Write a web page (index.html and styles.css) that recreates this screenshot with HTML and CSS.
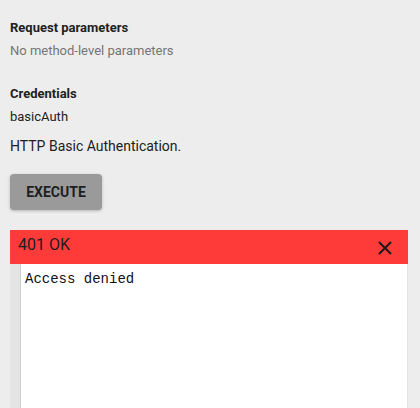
FILE: index.html
```html
<!DOCTYPE html>
<html>
<head>
<meta charset="utf-8">
<link rel="stylesheet" href="styles.css">
</head>
<body>
<div class="page">
  <section class="params">
    <h3 class="label">Request parameters</h3>
    <p class="muted">No method-level parameters</p>
  </section>
  <section class="creds">
    <h3 class="label">Credentials</h3>
    <p class="value">basicAuth</p>
    <p class="desc">HTTP Basic Authentication.</p>
  </section>
  <button class="execute">EXECUTE</button>
  <div class="response">
    <div class="status">
      <span class="code">401 OK</span>
      <svg class="close" width="14" height="14" viewBox="0 0 14 14"><path d="M1 1 L13 13 M13 1 L1 13" stroke="#1a1a1a" stroke-width="2" fill="none"/></svg>
    </div>
    <div class="body-wrap">
      <pre class="output">Access denied</pre>
    </div>
  </div>
</div>
</body>
</html>
```

FILE: styles.css
```css
html, body {
  margin: 0;
  padding: 0;
  background: #ededed;
  height: 408px;
  overflow: hidden;
}
.page {
  padding: 20px 12px 0 10px;
  font-family: Roboto, "Liberation Sans", sans-serif;
  color: #212121;
}
.label {
  margin: 0;
  font-size: 13px;
  font-weight: 700;
  line-height: 16px;
}
.muted {
  margin: 7px 0 0;
  font-size: 13px;
  line-height: 16px;
  color: #757575;
}
.creds {
  margin-top: 27px;
}
.value {
  margin: 7px 0 0;
  font-size: 13px;
  line-height: 16px;
}
.desc {
  margin: 13px 0 0;
  font-size: 14px;
  line-height: 16px;
}
.execute {
  display: block;
  margin-top: 20px;
  width: 92px;
  height: 36px;
  border: none;
  border-radius: 4px;
  background: #9a9a9a;
  color: #1f1f1f;
  font-family: Roboto, "Liberation Sans", sans-serif;
  font-size: 14px;
  font-weight: 700;
  padding: 0;
  box-shadow: 0 1px 3px rgba(0,0,0,0.25);
}
.response {
  margin-top: 20px;
  background: #e4e4e4;
  padding-right: 1px;
}
.status {
  display: flex;
  align-items: flex-start;
  justify-content: space-between;
  background: #ff3b39;
  height: 34px;
  box-sizing: border-box;
  padding: 5px 16px 0 8px;
  margin-right: -1px;
}
.code {
  font-size: 16px;
  line-height: 20px;
  color: #1d1d1d;
}
.close {
  margin-top: 6px;
}
.body-wrap {
  padding-left: 10px;
}
.output {
  margin: 0;
  background: #ffffff;
  border-left: 1px solid #cfcfcf;
  height: 144px;
  box-sizing: border-box;
  padding: 7px 4px;
  font-family: "Liberation Mono", "Courier New", monospace;
  font-size: 14px;
  line-height: 16px;
  color: #111;
}
```
